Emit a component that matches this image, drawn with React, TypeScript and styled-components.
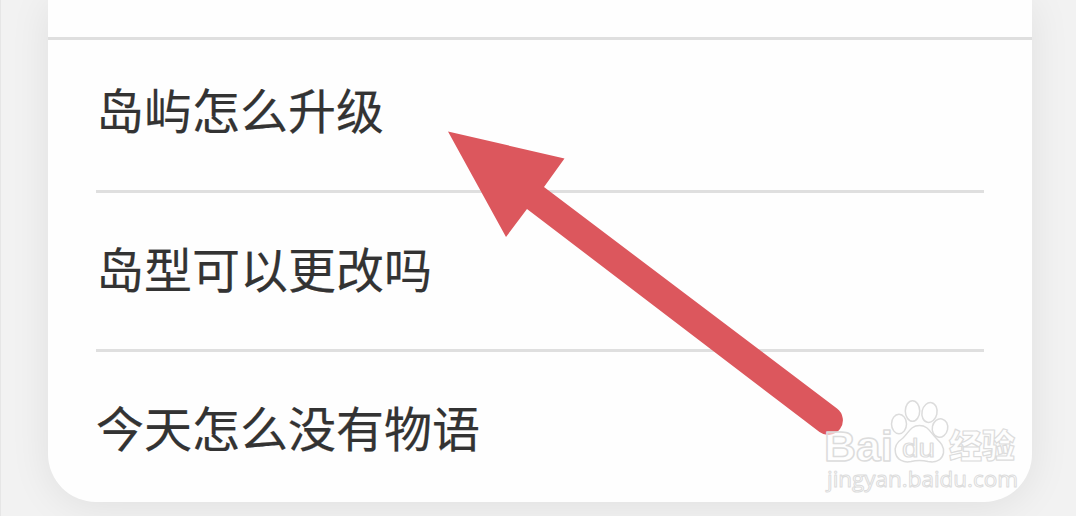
import React from 'react';
import styled, { createGlobalStyle } from 'styled-components';

const GlobalStyle = createGlobalStyle`
  body {
    margin: 0;
    background: #f2f2f2;
    overflow: hidden;
  }
`;

const Page = styled.div`
  position: relative;
  box-sizing: border-box;
  width: 1076px;
  height: 516px;
  padding: 0 44px 14px 47px;
  border-left: 1px solid #e6e6e6;
  overflow: hidden;
  font-family: 'Noto Sans CJK SC', sans-serif;
`;

const Card = styled.div`
  display: flex;
  flex-direction: column;
  height: 502px;
  background: #fefefe;
  border-radius: 0 0 48px 48px;
  box-shadow: 0 4px 40px rgba(0, 0, 0, 0.08);
`;

const CardHeader = styled.div`
  flex: none;
  height: 37px;
  border-bottom: 3px solid #dfdfdf;
`;

const QuestionList = styled.ul`
  margin: 0;
  padding: 0 48px;
  list-style: none;
`;

const Question = styled.li`
  box-sizing: border-box;
  height: 150px;
  line-height: 136px;
  color: #333;
  font-size: 48px;
  white-space: nowrap;
  -webkit-text-stroke: 0.2px #333;

  & + & {
    height: 159px;
    line-height: 148px;
    border-top: 3px solid #dfdfdf;
  }
`;

const Overlay = styled.svg`
  position: absolute;
  top: 0;
  left: -1px;
`;

const questions = ['岛屿怎么升级', '岛型可以更改吗', '今天怎么没有物语'];

const Arrow = () => (
  <path
    d="M448 131.5L564.5 158.5L544 187L837 408.5A14.5 14.5 0 0 1 819.5 432L527 209L506 237Z"
    fill="#dc575d"
  />
);

const Watermark = () => (
  <g
    fill="#fff"
    fillOpacity="0.65"
    stroke="#dcdcdc"
    strokeWidth="1.5"
    strokeLinejoin="round"
    fontFamily="'Liberation Sans', sans-serif"
  >
    <text
      x="824"
      y="460.5"
      fontSize="43"
      fontWeight="bold"
      textLength="69"
      lengthAdjust="spacingAndGlyphs"
    >
      Bai
    </text>
    <ellipse cx="899" cy="424" rx="7.5" ry="9.7" />
    <ellipse cx="912.5" cy="411" rx="7.2" ry="10.3" />
    <ellipse cx="929.5" cy="412.5" rx="7.5" ry="10" transform="rotate(12 929.5 412.5)" />
    <ellipse cx="940" cy="428" rx="7.7" ry="9.3" transform="rotate(12 940 428)" />
    <path d="M919.5 425.5C911 425.5 909 432 903 438C897 442 894 447 895.5 453C897 460 904 463 911 461.5C917 460 922 460 928 461.5C936 463 942 460 943.5 453C944.5 446 940 442 936 438C930 432 928 425.5 919.5 425.5Z" />
    <text
      x="902"
      y="457"
      fontSize="26"
      strokeWidth="1.2"
      textLength="33"
      lengthAdjust="spacingAndGlyphs"
    >
      du
    </text>
    <text
      x="949"
      y="458"
      fontSize="33"
      fontWeight="900"
      strokeWidth="1.2"
      fontFamily="'Noto Sans CJK SC', sans-serif"
    >
      经验
    </text>
    <text
      x="827"
      y="486.5"
      fontSize="22"
      strokeWidth="1"
      fontFamily="'Open Sans', sans-serif"
      textLength="191"
      lengthAdjust="spacingAndGlyphs"
    >
      jingyan.baidu.com
    </text>
  </g>
);

const App = () => (
  <>
    <GlobalStyle />
    <Page>
      <Card>
        <CardHeader />
        <QuestionList>
          {questions.map((question) => (
            <Question key={question}>{question}</Question>
          ))}
        </QuestionList>
      </Card>
      <Overlay width="1076" height="516" viewBox="0 0 1076 516">
        <Arrow />
        <Watermark />
      </Overlay>
    </Page>
  </>
);

export default App;
